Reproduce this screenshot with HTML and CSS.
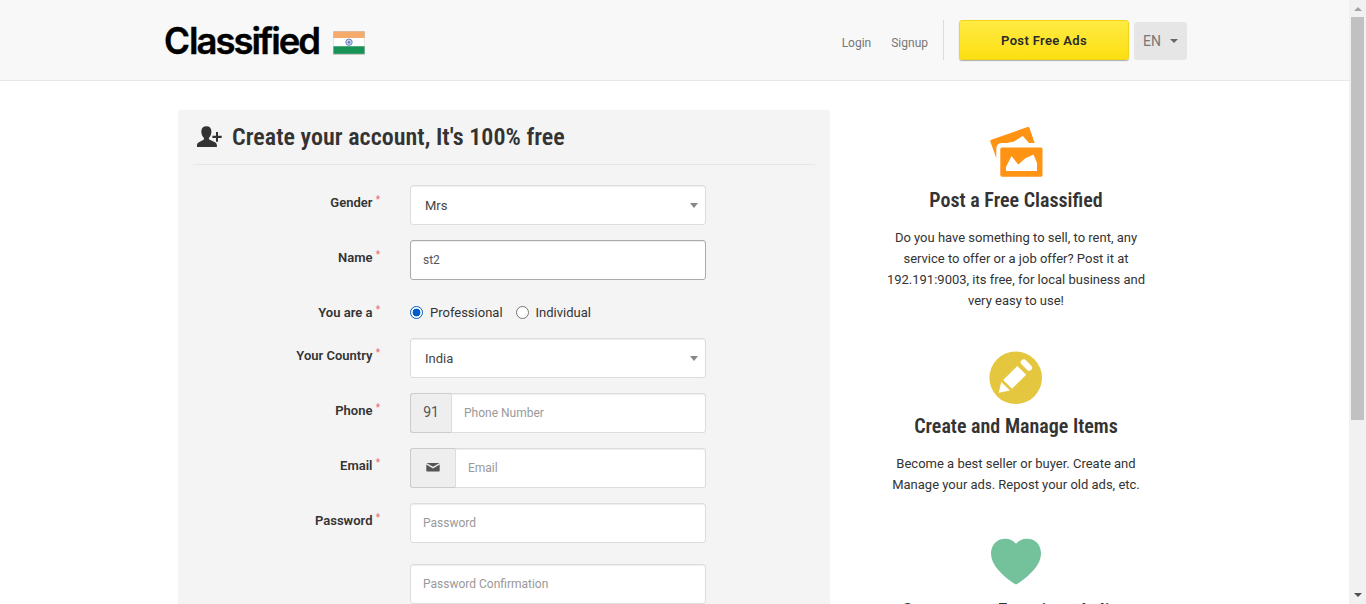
FILE: index.html
```html
<!DOCTYPE html>
<html lang="en">
<head>
<meta charset="utf-8">
<title>Classified</title>
<link rel="stylesheet" href="styles.css">
</head>
<body>
<div class="page">
  <header class="header">
    <a class="brand" aria-label="Classified">
      <svg class="logo" width="160" height="48" viewBox="0 0 160 48"><text y="40"><tspan x="1" textLength="26" lengthAdjust="spacingAndGlyphs">C</tspan><tspan x="26" textLength="132" lengthAdjust="spacing">lassified</tspan></text></svg>
      <svg class="flag" width="34" height="26" viewBox="0 0 34 26">
        <rect x="1" y="1" width="32" height="24" rx="1" fill="#c8c8c8"/>
        <rect x="1.500" y="1.500" width="31" height="7" fill="#f6ab6c"/>
        <rect x="1.500" y="8" width="31" height="8.500" fill="#fff"/>
        <rect x="1.500" y="16.300" width="31" height="7.500" fill="#179455"/>
        <circle cx="17" cy="12.200" r="3.200" fill="#dfe5f5" stroke="#6785c2" stroke-width="1"/>
        <circle cx="17" cy="12.200" r="1.200" fill="#4c6db4"/>
        <path d="M17 9v6.400M13.800 12.200h6.400M14.800 10l4.400 4.400M19.200 10l-4.400 4.400" stroke="#7890c8" stroke-width=".4"/>
      </svg>
    </a>
    <nav class="nav">
      <a>Login</a><a>Signup</a>
      <span class="rule"></span>
      <a class="post">Post Free Ads</a>
      <a class="lang">EN<i class="caret"></i></a>
    </nav>
  </header>
  <main class="main">
    <section class="card">
      <h2 class="title">
        <svg width="26" height="24" viewBox="0 0 26 24" fill="#333"><path d="M9.400 1.200c3.100 0 5 1.800 5 5.300 0 2.600-.9 4.700-2.200 6.100-.5.600-.5 1.600.1 2l5.600 2.700c1.400.7 2 1.700 2 3.100v1.500H0v-1.500c0-1.500.6-2.500 2-3.100l4.500-2.600c.7-.5.7-1.500.1-2.200C5.300 11.200 4.300 9.100 4.300 6.500c0-3.500 2-5.300 5.100-5.300z"/><path d="M19 7v3.700h-3.600v2.200H19v3.800h2v-3.800h3.700v-2.200H21V7z" stroke="#f4f4f4" stroke-width=".7" paint-order="stroke"/></svg>
        <span>Create your account, It's 100% free</span>
      </h2>
      <form class="form">
        <div class="row"><label>Gender <sup>*</sup></label><div class="field select">Mrs<i class="arrow"></i></div></div>
        <div class="row"><label>Name <sup>*</sup></label><div class="field value">st2</div></div>
        <div class="row radios"><label>You are a <sup>*</sup></label><div class="options"><i class="radio on"></i><span class="first">Professional</span><i class="radio"></i><span>Individual</span></div></div>
        <div class="row"><label>Your Country <sup>*</sup></label><div class="field select">India<i class="arrow"></i></div></div>
        <div class="row"><label>Phone <sup>*</sup></label><div class="group"><span class="addon phone">91</span><div class="field">Phone Number</div></div></div>
        <div class="row"><label>Email <sup>*</sup></label><div class="group"><span class="addon email"><svg width="14" height="9" viewBox="0 0 14 9" fill="#555"><path d="M.4 0h13.200L7 3.700z"/><path d="M.3 1.400L7 5.500l6.700-4.100v6.100c0 .7-.4 1-1 1H1.300c-.6 0-1-.3-1-1z"/></svg></span><div class="field">Email</div></div></div>
        <div class="row last"><label>Password <sup>*</sup></label><div class="field">Password</div></div>
        <div class="row"><label></label><div class="field">Password Confirmation</div></div>
      </form>
    </section>
    <aside class="side">
      <article>
        <svg width="52" height="52" viewBox="0 0 52 52" class="photos" fill="#ff9314"><path d="M.3 14.600Q0 13.300 1.200 12.800L37.500.1q1.500-.5 2 1L44.700 16H39L32.800 8.900 24 14.500 17 16H12Q6.500 16 6.300 21.500V31Z"/><path fill-rule="evenodd" d="M12 20.500h39q1.500 0 1.500 1.500v26q0 1.800-1.500 1.800H12q-1.700 0-1.700-1.800V22q0-1.500 1.700-1.500zM16 44h31V36L43.500 27.500 35 31.500 28.300 37.500 21.500 29 16 40z"/></svg>
        <h3>Post a Free Classified</h3>
        <p>Do you have something to sell, to rent, any<br>service to offer or a job offer? Post it at<br>192.191:9003, its free, for local business and<br>very easy to use!</p>
      </article>
      <article class="second">
        <svg width="54" height="54" viewBox="0 0 54 54"><circle cx="26.700" cy="26.800" r="26.300" fill="#e4c73f"/><g fill="#fff"><path d="M28.300 15L37.200 23.700 23 37.800 14.200 29z"/><path d="M12.300 31L21 39.500 9.700 41.700z"/><path d="M32.300 13q-1.700-1.900.4-3.900 2.200-1.800 4.300.1l5.300 5.500q1.900 2 0 4.100-2.100 2-4.100.2z"/></g></svg>
        <h3>Create and Manage Items</h3>
        <p>Become a best seller or buyer. Create and<br>Manage your ads. Repost your old ads, etc.</p>
      </article>
      <article class="third">
        <svg width="54" height="50" viewBox="0 0 54 50"><path d="M27 5.800C30 2 33.500.7 37.500.7 47 .7 52 7 52 15.700c0 11-10.500 21.300-23.500 30q-1.500 1.100-3 0C12.500 37 2 26.700 2 15.700 2 7 7.500.7 16.500.7 20.500.7 24 2 27 5.800z" fill="#74c29b"/></svg>
        <h3>Create your Favorite ads list.</h3>
      </article>
    </aside>
  </main>
</div>
<div class="scrollbar"><i class="up"></i><i class="thumb"></i><i class="down"></i></div>
</body>
</html>
```
FILE: styles.css
```css
* { box-sizing: border-box; }
body { margin: 0; height: 604px; overflow: hidden; display: flex; background: #fff; font: 13px/21px Roboto, sans-serif; color: #333; }
svg { display: block; flex: none; }
.page { width: 1349px; height: 604px; overflow: hidden; }
.header { height: 81px; background: #f8f8f8; border-bottom: 1px solid #e7e7e7; display: flex; justify-content: space-between; align-items: flex-start; padding: 20px 162px 0 163px; }
.brand { display: flex; }
.logo { margin-top: -6px; overflow: visible; }
.logo text { font: 600 36.5px Inter, sans-serif; fill: #000; stroke: #000; stroke-width: .4px; stroke-linejoin: round; }
.flag { margin: 10px 0 0 9px; }
.nav { display: flex; font-size: 12px; color: #777; }
.nav > a { margin: 13px 20px 0 0; }
.nav > a:nth-child(2) { margin-right: 15px; }
.rule { width: 1px; height: 40px; background: #ddd; margin-right: 15px; }
.nav .post { width: 170px; height: 40px; margin: 0 5px 0 0; border: 1px solid #f2d514; border-radius: 3px; background: linear-gradient(#ffeb43, #fcdf12); box-shadow: 0 1px 1px #aaa; color: #292b2c; font-weight: 600; font-size: 13px; letter-spacing: .35px; line-height: 39px; text-align: center; }
.nav .lang { width: 53px; height: 38px; margin: 2px 0 0; padding: 0 9px; border-radius: 3px; background: #e6e6e6; font-size: 14px; line-height: 37px; display: flex; align-items: center; justify-content: space-between; }
.caret { border: 4px solid transparent; border-top-color: #666; border-bottom: 0; }
.main { display: flex; align-items: flex-start; padding: 29px 0 0 178px; }
.card { width: 652px; height: 520px; background: #f4f4f4; border-radius: 3px; padding: 0 15px; }
.title { display: flex; align-items: center; height: 55px; margin: 0; padding-left: 4px; border-bottom: 1px solid #e6e6e6; font: 600 24px/30px "Roboto Condensed", Roboto, sans-serif; font-stretch: 75%; letter-spacing: .04px; }
.title span { margin-left: 9px; }
.form { padding-top: 20px; }
.row { display: flex; height: 40px; margin-bottom: 15px; }
.row label { width: 187px; margin-right: 30px; padding-top: 7px; text-align: right; font-weight: 600; white-space: nowrap; }
sup { font-size: 10px; font-weight: 400; color: #e86464; line-height: 0; vertical-align: 4px; }
.field { width: 296px; height: 40px; border: 1px solid #ddd; border-radius: 3px; box-shadow: inset 0 1px 1px rgba(0,0,0,.075); background: #fff; padding: 0 12px; font-size: 12px; line-height: 38px; color: #999; }
.select { display: flex; align-items: center; justify-content: space-between; padding: 1px 7px 0 14px; font-size: 13px; line-height: 40px; color: #444; }
.arrow { border: 4px solid transparent; border-top: 5px solid #888; border-bottom: 0; }
.value { border-color: #aaa; color: #555; }
.radios { height: 28px; }
.options { display: flex; height: 34px; align-items: center; }
.options .first { margin-right: 13px; }
.radio { width: 13px; height: 13px; margin-right: 7px; border: 1px solid #767676; border-radius: 50%; background: #fff; }
.radio.on { border-color: #005cc8; background: radial-gradient(#005cc8 0 3.700px, #fff 4.200px); }
.group { display: flex; width: 296px; }
.group .field { flex: 1; border-left: 0; border-radius: 0 3px 3px 0; }
.addon { height: 40px; border: 1px solid #ccc; border-right-color: #ddd; border-radius: 3px 0 0 3px; background: #eee; display: flex; align-items: center; justify-content: center; font-size: 14px; color: #555; }
.phone { width: 42px; padding-bottom: 1px; }
.email { width: 46px; padding-bottom: 2px; }
.last { margin-bottom: 21px; }
.side { width: 272px; margin-left: 50px; padding-top: 17px; text-align: center; }
.side svg { margin: 0 auto; }
.side .photos { overflow: visible; }
.side h3 { margin: 6px 0 12px; font: 600 20px/30px "Roboto Condensed", Roboto, sans-serif; font-stretch: 75%; white-space: nowrap; }
.side p { margin: 0; }
.second { margin-top: 40px; }
.third { margin-top: 43px; }
.side .third h3 { margin-top: 8px; }
.scrollbar { width: 17px; height: 604px; background: #f1f1f1; display: flex; flex-direction: column; align-items: center; padding: 7px 0; }
.scrollbar i { flex: none; }
.up { border: 4px solid transparent; border-bottom-color: #a3a3a3; border-top: 0; }
.thumb { width: 13px; height: 403px; margin-top: 6px; background: #c1c1c1; }
.down { border: 4px solid transparent; border-top-color: #505050; border-bottom: 0; margin-top: auto; }
```
